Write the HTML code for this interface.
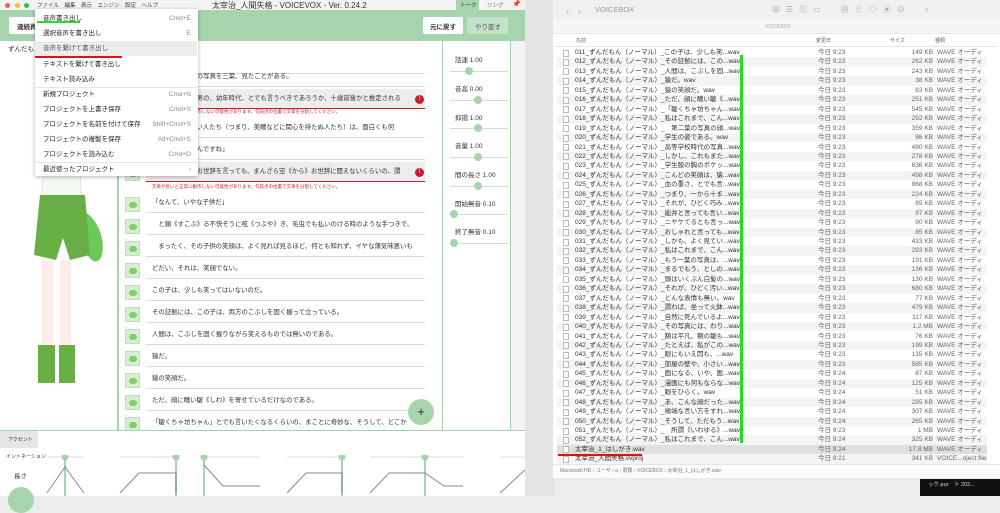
<!DOCTYPE html>
<html><head><meta charset="utf-8">
<style>
*{margin:0;padding:0;box-sizing:border-box}
body{width:1000px;height:496px;overflow:hidden;background:#ececec;font-family:"Liberation Sans","Noto Sans CJK JP",sans-serif;position:relative;color:#333}
.a{position:absolute}
.t{position:absolute;white-space:nowrap}
.row{position:absolute;left:118px;width:320px;height:22px}
.row .ic{position:absolute;left:7px;top:4px;width:15px;height:15px;background:#d8eed2;border:1px solid #c0dcb8}
.row .ic:after{content:"";position:absolute;left:3px;top:4px;width:8px;height:6px;background:#7fcf6a;border-radius:3px}
.row .tx{position:absolute;left:28px;top:0;width:279px;height:20px;border-bottom:1px solid #cde3d0;font-size:6.4px;line-height:20px;padding-left:6px;white-space:nowrap;overflow:hidden}
.mi{position:absolute;left:0;width:162px;height:15px;font-size:6.5px;line-height:15px;padding-left:8px;color:#222}
.mi span{position:absolute;right:6px;color:#888}
.fr{position:absolute;left:557px;width:430px;height:9.4px;font-size:6.5px;line-height:9.4px;color:#333}
.fr .n{position:absolute;left:18px}
.fr .d{position:absolute;left:261px;color:#666}
.fr .s{position:absolute;left:300px;width:76px;text-align:right;color:#666}
.fr .k{position:absolute;left:380px;color:#666}
.fr .i{position:absolute;left:6px;top:1.5px;width:6px;height:7px;border:1px solid #bbb;background:#fff}
.pl{position:absolute;left:455px;font-size:6.5px;color:#333}
.sl{position:absolute;left:450px;width:58px;height:1px;background:#cfe0d2}
.kn{position:absolute;width:8px;height:8px;border-radius:50%;background:#a5d4ad;top:-4px}
</style></head><body>
<div class="a" style="left:525px;top:0;width:30px;height:496px;background:#e4e4e4"></div>
<div class="a" style="left:0;top:0;width:525px;height:496px;background:#fff;border-right:1px solid #ccc"></div>
<div class="a" style="left:0;top:0;width:525px;height:10px;background:#f3f3f3"></div>
<div class="a" style="left:5px;top:2.5px;width:5px;height:5px;border-radius:50%;background:#ee5f57"></div>
<div class="a" style="left:15px;top:2.5px;width:5px;height:5px;border-radius:50%;background:#f5bd2f"></div>
<div class="a" style="left:24px;top:2.5px;width:5px;height:5px;border-radius:50%;background:#29c740"></div>
<div class="t" style="left:37px;top:1px;font-size:5.5px;color:#444">ファイル　編集　表示　エンジン　設定　ヘルプ</div>
<div class="t" style="left:212px;top:0;font-size:8px;color:#333">太宰治_人間失格 - VOICEVOX - Ver. 0.24.2</div>
<div class="a" style="left:456px;top:0;width:23px;height:10px;background:#a5d4ad"></div>
<div class="t" style="left:460px;top:1px;font-size:5.5px">トーク</div>
<div class="t" style="left:487px;top:1px;font-size:5.5px;color:#666">ソング</div>
<div class="t" style="left:512px;top:0px;font-size:7px">📌</div>
<div class="a" style="left:0;top:10px;width:525px;height:31px;background:#a5d4ad"></div>
<div class="a" style="left:9px;top:17px;width:40px;height:17px;background:#fff;border-radius:2px"></div>
<div class="t" style="left:17px;top:21px;font-size:6.5px;font-weight:bold">連続再</div>
<div class="a" style="left:423px;top:17px;width:40px;height:17px;background:#fff;border-radius:2px"></div>
<div class="t" style="left:430px;top:21px;font-size:6.5px;font-weight:bold">元に戻す</div>
<div class="a" style="left:467px;top:17px;width:41px;height:17px;background:#c4e2c8;border-radius:2px"></div>
<div class="t" style="left:475px;top:21px;font-size:6.5px;color:#555">やり直す</div>
<div class="a" style="left:0;top:41px;width:118px;height:390px;background:#fff;border-right:1px solid #a5d4ad"></div>
<div class="t" style="left:8px;top:43px;font-size:6.5px">ずんだもん</div>
<svg class="a" style="left:30px;top:150px" width="80" height="260" viewBox="0 0 80 260">
<path d="M52 60 C80 75 76 120 62 110 C52 103 58 88 48 78Z" fill="#6dc957"/>
<path d="M14 20 L50 20 L52 60 L10 60Z" fill="#f4f9f2" stroke="#e2e2e2"/>
<path d="M10 45 L55 45 L60 105 L40 110 L33 88 L26 110 L4 105Z" fill="#68b046"/>
<rect x="12" y="110" width="11" height="85" fill="#fcecea"/>
<rect x="30" y="110" width="11" height="85" fill="#fcecea"/>
<rect x="8" y="195" width="17" height="38" fill="#68b046"/>
<rect x="29" y="195" width="16" height="38" fill="#68b046"/>
</svg>
<div class="a" style="left:118px;top:41px;width:325px;height:390px;border-left:1px solid #a5d4ad;border-right:1px solid #a5d4ad;background:#fff"></div>
<div class="row" style="top:54px"><div class="ic"></div><div class="tx">最初の</div></div>
<div class="row" style="top:67px"><div class="ic"></div><div class="tx">　私は、その男の写真を三葉、見たことがある。</div></div>
<div class="a" style="left:146px;top:89px;width:279px;height:20px;background:#ededed;border-bottom:1px solid #c0202e"></div>
<div class="row" style="top:89px"><div class="ic"></div><div class="tx" style="border:none">　一葉は、その男の、幼年時代、とでも言うべきであろうか、十歳前後かと推定される</div></div>
<div class="a" style="left:415px;top:95px;width:9px;height:9px;border-radius:50%;background:#c0202e;color:#fff;font-size:6px;text-align:center;line-height:9px">!</div>
<div class="t" style="left:152px;top:109px;font-size:4.5px;color:#c0202e">文章が長いと正常に動作しない可能性があります。句読点の位置で文章を分割してください。</div>
<div class="row" style="top:118px"><div class="ic"></div><div class="tx">　それでも、鈍い人たち（つまり、美醜などに関心を持たぬ人たち）は、面白くも何</div></div>
<div class="row" style="top:140px"><div class="ic"></div><div class="tx">「可愛い坊ちゃんですね」</div></div>
<div class="a" style="left:146px;top:162px;width:279px;height:20px;background:#ededed;border-bottom:1px solid #c0202e"></div>
<div class="row" style="top:162px"><div class="ic"></div><div class="tx" style="border:none">　といい加減なお世辞を言っても、まんざら空《から》お世辞に聞えないくらいの、謂</div></div>
<div class="a" style="left:415px;top:168px;width:9px;height:9px;border-radius:50%;background:#c0202e;color:#fff;font-size:6px;text-align:center;line-height:9px">!</div>
<div class="t" style="left:152px;top:184px;font-size:4.5px;color:#c0202e">文章が長いと正常に動作しない可能性があります。句読点の位置で文章を分割してください。</div>
<div class="row" style="top:193px"><div class="ic"></div><div class="tx">「なんて、いやな子供だ」</div></div>
<div class="row" style="top:215px"><div class="ic"></div><div class="tx">　と頗《すこぶ》る不快そうに呟《つぶや》き、毛虫でも払いのける時のような手つきで、</div></div>
<div class="row" style="top:237px"><div class="ic"></div><div class="tx">　まったく、その子供の笑顔は、よく見れば見るほど、何とも知れず、イヤな薄気味悪いも</div></div>
<div class="row" style="top:259px"><div class="ic"></div><div class="tx">どだい、それは、笑顔でない。</div></div>
<div class="row" style="top:281px"><div class="ic"></div><div class="tx">この子は、少しも笑ってはいないのだ。</div></div>
<div class="row" style="top:303px"><div class="ic"></div><div class="tx">その証拠には、この子は、両方のこぶしを固く握って立っている。</div></div>
<div class="row" style="top:325px"><div class="ic"></div><div class="tx">人間は、こぶしを固く握りながら笑えるものでは無いのである。</div></div>
<div class="row" style="top:347px"><div class="ic"></div><div class="tx">猿だ。</div></div>
<div class="row" style="top:369px"><div class="ic"></div><div class="tx">猿の笑顔だ。</div></div>
<div class="row" style="top:391px"><div class="ic"></div><div class="tx">ただ、顔に醜い皺《しわ》を寄せているだけなのである。</div></div>
<div class="row" style="top:413px"><div class="ic"></div><div class="tx">「皺くちゃ坊ちゃん」とでも言いたくなるくらいの、まことに奇妙な、そうして、どこか</div></div>
<div class="a" style="left:408px;top:399px;width:26px;height:26px;border-radius:50%;background:#a5d4ad;text-align:center;line-height:26px;font-size:13px;color:#333">+</div>
<div class="a" style="left:443px;top:41px;width:68px;height:390px;background:#fff;border-right:1px solid #a5d4ad"></div>
<div class="a" style="left:511px;top:41px;width:14px;height:390px;background:#f4f4f4"></div>
<div class="pl" style="top:54px">話速 1.00</div><div class="sl" style="top:71px"><div class="kn" style="left:15px"></div></div>
<div class="pl" style="top:83px">音高 0.00</div><div class="sl" style="top:100px"><div class="kn" style="left:24px"></div></div>
<div class="pl" style="top:112px">抑揚 1.00</div><div class="sl" style="top:128px"><div class="kn" style="left:24px"></div></div>
<div class="pl" style="top:140px">音量 1.00</div><div class="sl" style="top:157px"><div class="kn" style="left:24px"></div></div>
<div class="pl" style="top:169px">間の長さ 1.00</div><div class="sl" style="top:186px"><div class="kn" style="left:24px"></div></div>
<div class="pl" style="top:198px">開始無音 0.10</div><div class="sl" style="top:214px"><div class="kn" style="left:0px"></div></div>
<div class="pl" style="top:226px">終了無音 0.10</div><div class="sl" style="top:243px"><div class="kn" style="left:0px"></div></div>
<div class="a" style="left:0;top:430px;width:525px;height:66px;background:#fff;border-top:1px solid #a5d4ad"></div>
<div class="a" style="left:0;top:431px;width:38px;height:17px;background:#e6e6e6"></div>
<div class="t" style="left:8px;top:436px;font-size:5px">アクセント</div>
<div class="t" style="left:6px;top:453px;font-size:5px">イントネーション</div>
<div class="t" style="left:14px;top:470px;font-size:6.5px">長さ</div>
<div class="a" style="left:8px;top:487px;width:26px;height:26px;border-radius:50%;background:#a5d4ad"></div>
<svg class="a" style="left:40px;top:455px" width="485" height="41" viewBox="0 0 485 41" fill="none" stroke-width="1">
<g stroke="#ddd"><line x1="7" y1="2" x2="44" y2="2"/><line x1="80" y1="2" x2="136" y2="2"/><line x1="163" y1="2" x2="220" y2="2"/><line x1="247" y1="2" x2="303" y2="2"/><line x1="330" y1="2" x2="423" y2="2"/><line x1="460" y1="2" x2="485" y2="2"/></g>
<g stroke="#a5d4ad" stroke-width="2"><line x1="25" y1="2" x2="25" y2="41"/><line x1="136" y1="2" x2="136" y2="41"/><line x1="164" y1="2" x2="164" y2="41"/><line x1="302" y1="2" x2="302" y2="41"/><line x1="385" y1="2" x2="385" y2="41"/></g>
<g fill="#a5d4ad"><circle cx="25" cy="2" r="3.5"/><circle cx="136" cy="2" r="3.5"/><circle cx="164" cy="2" r="3.5"/><circle cx="302" cy="2" r="3.5"/><circle cx="385" cy="2" r="3.5"/></g>
<g stroke="#888"><path d="M7 38 L25 12 L44 38"/><path d="M80 38 L99 18 L136 18 L136 38"/><path d="M164 10 L183 31 L220 31"/><path d="M247 38 L266 18 L302 18 L302 38"/><path d="M330 38 L349 18 L385 18 L404 31 L423 31"/><path d="M460 38 L485 15"/></g>
</svg>
<div class="a" style="left:35px;top:9px;width:163px;height:167px;background:#fff;box-shadow:0 1px 4px rgba(0,0,0,.3);border-radius:2px"></div>
<div class="a" style="left:35px;top:9px;width:163px;height:167px">
<div class="mi" style="top:2px">音声書き出し<span>Cmd+E</span></div>
<div class="mi" style="top:17px">選択音声を書き出し<span>E</span></div>
<div class="mi" style="top:32px;background:#ececec;color:#555">音声を繋げて書き出し</div>
<div class="mi" style="top:48px">テキストを繋げて書き出し</div>
<div class="mi" style="top:63px">テキスト読み込み</div>
<div class="a" style="left:0;top:78px;width:163px;height:1px;background:#e4e4e4"></div>
<div class="mi" style="top:78px">新規プロジェクト<span>Cmd+N</span></div>
<div class="mi" style="top:93px">プロジェクトを上書き保存<span>Cmd+S</span></div>
<div class="mi" style="top:108px">プロジェクトを名前を付けて保存<span>Shift+Cmd+S</span></div>
<div class="mi" style="top:123px">プロジェクトの複製を保存<span>Alt+Cmd+S</span></div>
<div class="mi" style="top:138px">プロジェクトを読み込む<span>Cmd+O</span></div>
<div class="a" style="left:0;top:153px;width:163px;height:1px;background:#e4e4e4"></div>
<div class="mi" style="top:153px">最近使ったプロジェクト<span>›</span></div>
</div>
<div class="a" style="left:37px;top:21px;width:43px;height:2px;background:#22dd22"></div>
<div class="a" style="left:35px;top:56px;width:87px;height:2px;background:#dd1111"></div>
<div class="a" style="left:553px;top:0;width:447px;height:478px;background:#fff"></div>
<div class="a" style="left:553px;top:0;width:447px;height:20px;background:#f0f0f0"></div>
<div class="t" style="left:566px;top:4px;font-size:9px;color:#aaa">‹　›</div>
<div class="t" style="left:595px;top:5px;font-size:7.5px;color:#999">VOICEBOX</div>
<div class="t" style="left:772px;top:4px;font-size:8px;color:#aaa;letter-spacing:6px">▦☰▥▭　▦⇧◇▣⊖　⌕</div>
<div class="a" style="left:553px;top:20px;width:447px;height:14px;background:#f5f5f5;border-bottom:1px solid #e6e6e6"></div>
<div class="t" style="left:765px;top:24px;font-size:5px;color:#aaa">VOICEBOX</div>
<div class="t" style="left:576px;top:37px;font-size:5px;color:#666">名前</div>
<div class="t" style="left:816px;top:37px;font-size:5px;color:#666">変更日</div>
<div class="t" style="left:890px;top:37px;font-size:5px;color:#666">サイズ</div>
<div class="t" style="left:935px;top:37px;font-size:5px;color:#666">種類</div>
<div class="a" style="left:556px;top:46px;width:440px;height:1px;background:#e4e4e4"></div>
<div id="rows"></div>
<div class="a" style="left:553px;top:464px;width:447px;height:14px;border-top:1px solid #e4e4e4;background:#fbfbfb"></div>
<div class="t" style="left:560px;top:467px;font-size:5px;color:#777">Macintosh HD › ユーザ › a › 書類 › VOICEBOX › 太宰治_1_はしがき.wav</div>
<div class="a" style="left:740px;top:55px;width:3px;height:388px;background:#22dd22"></div>
<div class="a" style="left:558px;top:454px;width:84px;height:2px;background:#dd1111"></div>
<div class="a" style="left:920px;top:479px;width:80px;height:17px;background:#111"></div>
<div class="t" style="left:928px;top:480px;font-size:5.5px;color:#ddd">ック.pur　ト 202...</div>
<script>
var names=["この子は、少しも笑...","その証拠には、この...","人間は、こぶしを固...","猿だ。","猿の笑顔だ。","ただ、顔に醜い皺《...","「皺くちゃ坊ちゃん...","私はこれまで、こん...","　第二葉の写真の顔...","学生の姿である。","高等学校時代の写真...","しかし、これもまた...","学生服の胸のポケッ...","こんどの笑顔は、猿...","血の重さ、とでも言...","つまり、一から十ま...","それが、ひどく巧み...","能弁と言っても言い...","ニヤケてるとも言っ...","おしゃれと言っても...","しかも、よく見てい...","私はこれまで、こん...","もう一葉の写真は、...","まるでもう、としの...","頭はいくぶん白髪の...","それが、ひどく汚い...","どんな表情も無い。","謂わば、坐って火鉢...","自然に死んでいるよ...","その写真には、わり...","額は平凡、額の皺も...","たとえば、私がこの...","眼にもいえ悶も、...","部屋の壁や、小さい...","画になる、いや、画...","漫画にも何もならな...","眼をひらく。","あ、こんな顔だった...","極端な言い方をすれ...","そうして、ただもう...","　所謂《いわゆる》...","私はこれまで、こん..."];
var sizes=["149 KB","262 KB","243 KB","38 KB","63 KB","251 KB","545 KB","292 KB","359 KB","86 KB","480 KB","278 KB","636 KB","498 KB","868 KB","224 KB","85 KB","97 KB","90 KB","85 KB","433 KB","293 KB","191 KB","136 KB","130 KB","680 KB","77 KB","479 KB","117 KB","1.2 MB","76 KB","199 KB","135 KB","585 KB","87 KB","125 KB","51 KB","285 KB","307 KB","265 KB","1 MB","325 KB"];
var h="";
for(var i=0;i<44;i++){var y=48+i*9.45;var bg=i%2?"#f4f4f4":"#fff";var n,d="今日 9:23",s,k="WAVE オーディオ";
if(i<42){n=String(i+11).padStart(3,"0")+"_ずんだもん（ノーマル）_"+names[i]+"wav";s=sizes[i];if(i>=34&&i!=40)d="今日 9:24";}
else if(i==42){n="太宰治_1_はしがき.wav";s="17.8 MB";d="今日 9:24";bg="#e0e0e0";}
else{n="太宰治_人間失格.vvproj";s="341 KB";d="今日 9:21";k="VOICE...oject file";}
h+='<div class="fr" style="top:'+y+'px;background:'+bg+'"><div class="i"></div><div class="n">'+n+'</div><div class="d">'+d+'</div><div class="s">'+s+'</div><div class="k">'+k+'</div></div>';}
document.getElementById("rows").innerHTML=h;
</script>
</body></html>
